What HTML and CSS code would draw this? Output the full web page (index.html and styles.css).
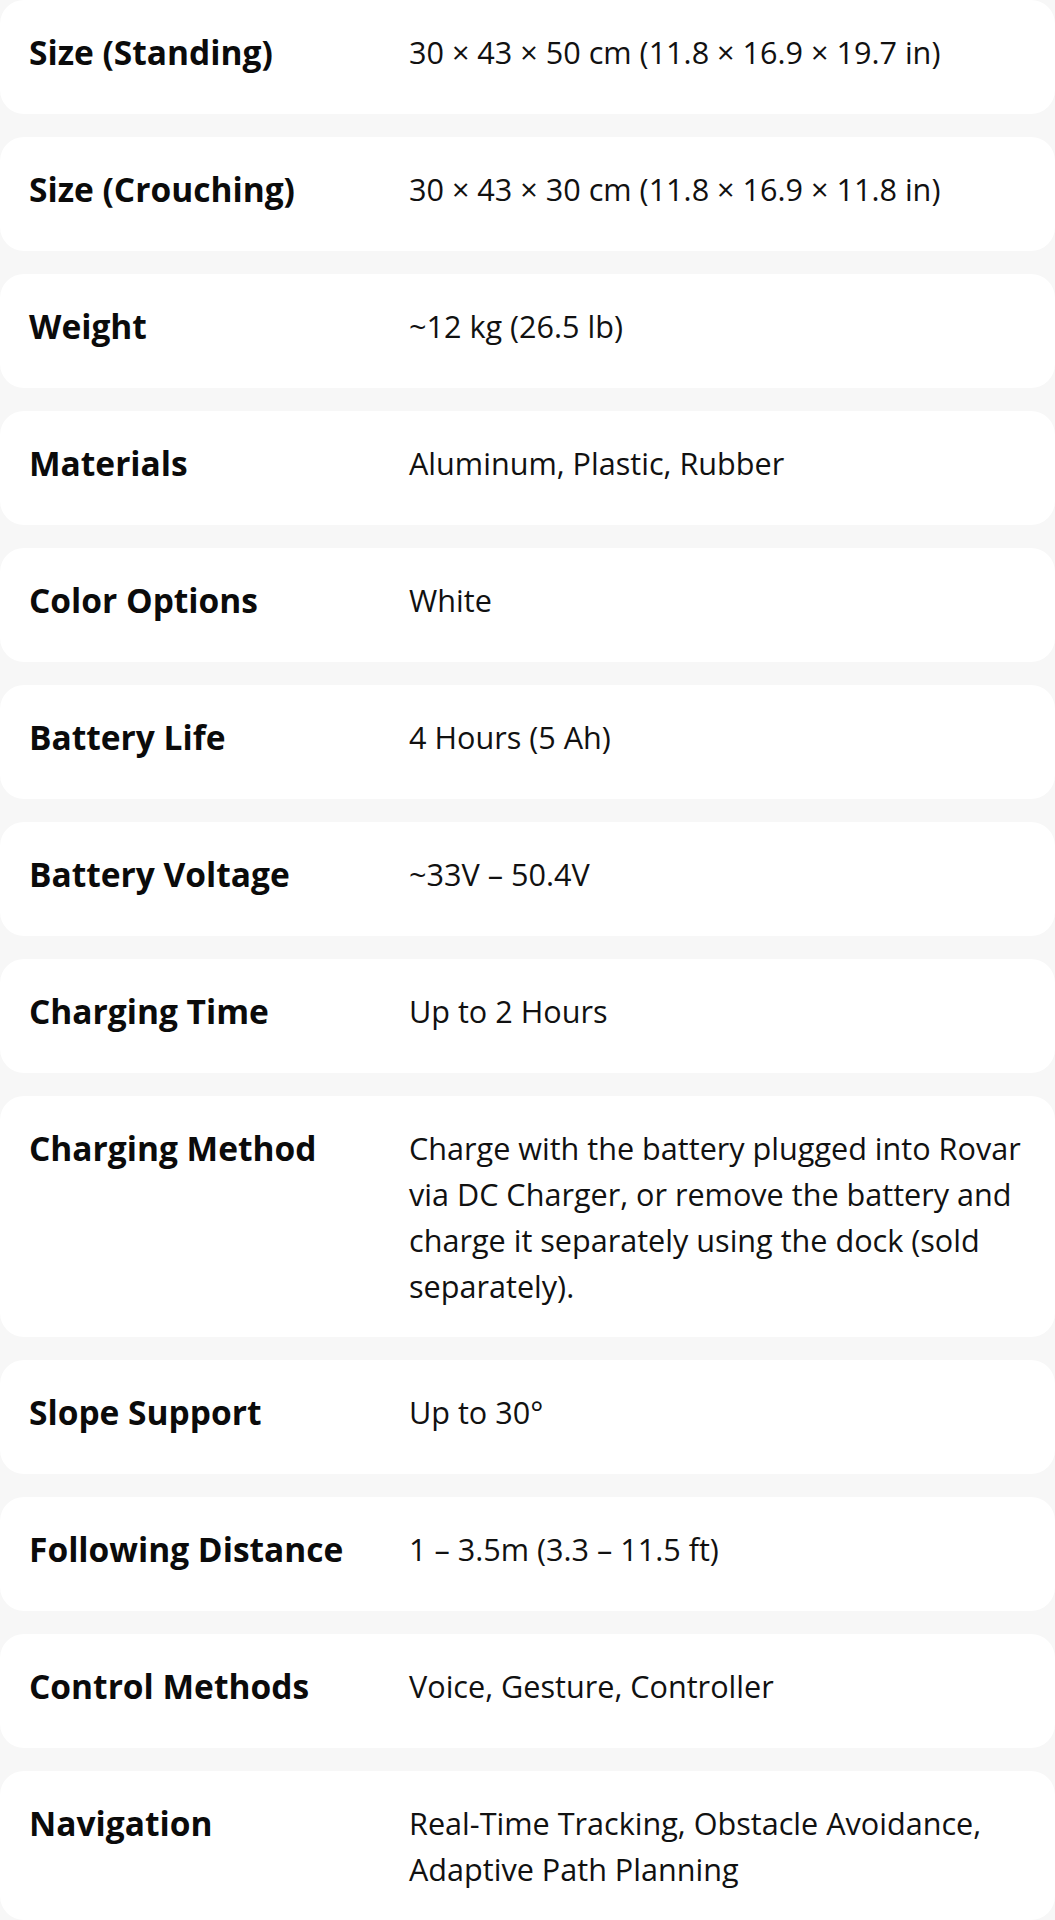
FILE: index.html
```html
<!DOCTYPE html>
<html lang="en">
<head>
    <meta charset="UTF-8">
    <meta name="viewport" content="width=device-width, initial-scale=1.0">
    <title>Rovar Specifications</title>
    <link rel="stylesheet" href="styles.css">
</head>
<body>
    <div class="specs">
        <div class="spec-row">
            <div class="spec-label">Size (Standing)</div>
            <div class="spec-value">30 × 43 × 50 cm (11.8 × 16.9 × 19.7 in)</div>
        </div>
        <div class="spec-row">
            <div class="spec-label">Size (Crouching)</div>
            <div class="spec-value">30 × 43 × 30 cm (11.8 × 16.9 × 11.8 in)</div>
        </div>
        <div class="spec-row">
            <div class="spec-label">Weight</div>
            <div class="spec-value">~12 kg (26.5 lb)</div>
        </div>
        <div class="spec-row">
            <div class="spec-label">Materials</div>
            <div class="spec-value">Aluminum, Plastic, Rubber</div>
        </div>
        <div class="spec-row">
            <div class="spec-label">Color Options</div>
            <div class="spec-value">White</div>
        </div>
        <div class="spec-row">
            <div class="spec-label">Battery Life</div>
            <div class="spec-value">4 Hours (5 Ah)</div>
        </div>
        <div class="spec-row">
            <div class="spec-label">Battery Voltage</div>
            <div class="spec-value">~33V – 50.4V</div>
        </div>
        <div class="spec-row">
            <div class="spec-label">Charging Time</div>
            <div class="spec-value">Up to 2 Hours</div>
        </div>
        <div class="spec-row">
            <div class="spec-label">Charging Method</div>
            <div class="spec-value">Charge with the battery plugged into Rovar via DC Charger, or remove the battery and charge it separately using the dock (sold separately).</div>
        </div>
        <div class="spec-row">
            <div class="spec-label">Slope Support</div>
            <div class="spec-value">Up to 30°</div>
        </div>
        <div class="spec-row">
            <div class="spec-label">Following Distance</div>
            <div class="spec-value">1 – 3.5m (3.3 – 11.5 ft)</div>
        </div>
        <div class="spec-row">
            <div class="spec-label">Control Methods</div>
            <div class="spec-value">Voice, Gesture, Controller</div>
        </div>
        <div class="spec-row">
            <div class="spec-label">Navigation</div>
            <div class="spec-value">Real-Time Tracking, Obstacle Avoidance, Adaptive Path Planning</div>
        </div>
    </div>
</body>
</html>
```

FILE: styles.css
```css
body {
    margin: 0;
    background-color: #f7f7f7;
    font-family: "Open Sans", "Liberation Sans", sans-serif;
    color: #111;
}
.specs {
    display: flex;
    flex-direction: column;
    gap: 23px;
}
.spec-row {
    display: grid;
    grid-template-columns: 380px 1fr;
    align-items: start;
    min-height: 114px;
    box-sizing: border-box;
    padding: 29px 29px 28px 29px;
    background-color: #fff;
    border-radius: 24px;
}
.spec-label {
    font-size: 33.5px;
    font-weight: 700;
    line-height: 46px;
    color: #0b0b0b;
}
.spec-value {
    font-size: 30.6px;
    line-height: 46px;
}
```
